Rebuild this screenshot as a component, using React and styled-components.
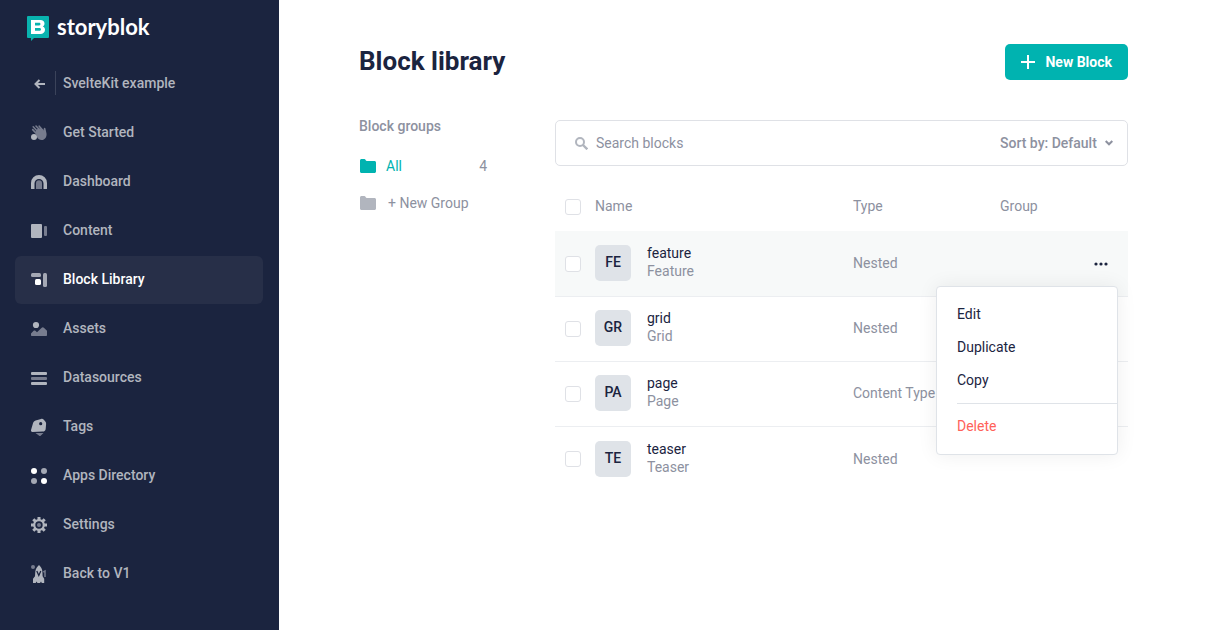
import React, { useState } from "react";
import styled, { createGlobalStyle } from "styled-components";

const GlobalStyle = createGlobalStyle`
  * {
    box-sizing: border-box;
  }
  body {
    margin: 0;
    background: #fff;
    color: #1b243f;
    font-family: Roboto, "Liberation Sans", sans-serif;
    font-size: 14px;
    line-height: 18px;
  }
  button, input, select {
    font: inherit;
    color: inherit;
  }
`;

const Layout = styled.div`
  display: flex;
  min-height: 100vh;
`;
const Sidebar = styled.aside`
  flex: 0 0 279px;
  padding: 15px 16px 0 15px;
  background: #1b243f;
`;
const Logo = styled.a`
  display: flex;
  align-items: center;
  gap: 8px;
  height: 26px;
  margin: 0 0 19px 12px;
  color: #fff;
  font-family: Lato, sans-serif;
  font-size: 22px;
  font-weight: 700;
  line-height: 24px;
  text-decoration: none;
`;
const LogoText = styled.span`
  padding-bottom: 2px;
`;
const Nav = styled.nav`
  display: flex;
  flex-direction: column;
  gap: 1px;
`;
const NavItem = styled.a`
  display: flex;
  align-items: center;
  height: 48px;
  padding: 0 15px 2px;
  border-radius: 6px;
  background: ${(props) => (props.$active ? "#272f48" : "transparent")};
  color: ${(props) => (props.$active ? "#fff" : "#b1b5be")};
  font-weight: 500;
  text-decoration: none;
`;
const NavIcon = styled.span`
  display: flex;
  align-items: center;
  width: 33px;
  height: 24px;
  padding: 2px 0 0 1px;
`;
const BackIcon = styled(NavIcon)`
  width: 26px;
  padding-left: 4px;
  margin-right: 7px;
  border-right: 1px solid #3b435a;
`;
const Main = styled.main`
  flex: 1;
  min-width: 0;
  padding: 44px 77px 40px 80px;
`;
const Header = styled.header`
  display: flex;
  align-items: center;
  justify-content: space-between;
  margin-bottom: 40px;
`;
const Title = styled.h1`
  margin: 0;
  padding-bottom: 2px;
  font-size: 26px;
  font-weight: 700;
  line-height: 34px;
`;
const NewBlock = styled.button`
  display: flex;
  align-items: center;
  gap: 10px;
  height: 36px;
  padding: 0 16px;
  border: none;
  border-radius: 5px;
  background: #00b3b0;
  color: #fff;
  font-weight: 700;
`;
const Body = styled.div`
  display: grid;
  grid-template-columns: 128px minmax(0, 1fr);
  gap: 68px;
`;
const Groups = styled.section`
  color: #8d919f;
`;
const GroupsTitle = styled.h2`
  margin: 0 0 15px;
  font-size: 14px;
  font-weight: 500;
  line-height: 12px;
`;
const GroupButton = styled.button`
  display: flex;
  align-items: center;
  gap: ${(props) => (props.$active ? "10px" : "12px")};
  width: 100%;
  height: 37px;
  padding: 0 0 0 1px;
  border: none;
  background: none;
  color: ${(props) => (props.$active ? "#00b3b0" : "#8d919f")};
`;
const Count = styled.span`
  margin-left: auto;
  color: #8d919f;
`;
const SearchBar = styled.div`
  display: flex;
  align-items: center;
  height: 46px;
  padding: 0 14px 0 19px;
  border: 1px solid #dfe1e6;
  border-radius: 5px;
  color: #8d919f;
`;
const SearchLabel = styled.label`
  display: flex;
  flex: 1;
  align-items: center;
  gap: 8px;
`;
const SearchInput = styled.input`
  flex: 1;
  min-width: 0;
  padding: 0;
  border: none;
  outline: none;
  background: none;
  &::placeholder {
    color: #8d919f;
    opacity: 1;
  }
`;
const SortSelect = styled.select`
  appearance: none;
  margin-right: 8px;
  padding: 0;
  border: none;
  background: none;
  font-weight: 500;
`;
const Table = styled.table`
  width: 100%;
  table-layout: fixed;
  border-collapse: separate;
  border-spacing: 0;
`;
const HeadCell = styled.th`
  width: ${(props) => props.$width || "auto"};
  height: 66px;
  padding: 15px 0 0;
  border-bottom: 1px solid #f7f9f9;
  color: #8d919f;
  font-weight: 400;
  text-align: left;
`;
const Row = styled.tr`
  background: ${(props) => (props.$active ? "#f7f9f9" : "#fff")};
  &:last-child td {
    border-bottom: none;
  }
`;
const Cell = styled.td`
  height: 65px;
  padding: 0 0 2px;
  border-bottom: 1px solid #eceef1;
  color: #8d919f;
`;
const Checkbox = styled.input`
  appearance: none;
  display: block;
  width: 16px;
  height: 16px;
  margin: 1px 0 0 10px;
  border: 1px solid #dfe1e6;
  border-radius: 3px;
  background: #fff;
  &:checked {
    background: #00b3b0;
  }
`;
const BlockInfo = styled.div`
  display: flex;
  align-items: center;
  gap: 16px;
`;
const Avatar = styled.span`
  width: 36px;
  height: 36px;
  border-radius: 5px;
  background: #dfe3e8;
  color: #1b243f;
  font-weight: 500;
  line-height: 34px;
  text-align: center;
`;
const BlockText = styled.div`
  padding-bottom: 2px;
`;
const BlockName = styled.div`
  color: #1b243f;
`;
const Actions = styled.div`
  position: relative;
  display: flex;
  justify-content: flex-end;
  padding-right: 20px;
`;
const MoreButton = styled.button`
  display: flex;
  padding: 8px 0 6px;
  border: none;
  background: none;
`;
const Menu = styled.div`
  position: absolute;
  z-index: 1;
  top: 32px;
  right: 10px;
  width: 182px;
  padding: 10px 0 12px 20px;
  border: 1px solid #dfe3e8;
  border-radius: 4px;
  background: #fff;
  box-shadow: 0 0 20px rgba(0, 0, 0, 0.07);
`;
const MenuItem = styled.button`
  display: block;
  width: 100%;
  height: 33px;
  padding: 0;
  border: none;
  background: none;
  color: ${(props) => (props.$danger ? "#ff6159" : "#1b243f")};
  text-align: left;
`;
const Divider = styled.hr`
  height: 1px;
  margin: 7px 0 5px;
  border: none;
  background: #dfe3e8;
`;

const icons = {
  started: (
    <>
      <g fill="none" stroke="#777c8e" strokeLinecap="round" strokeWidth="1.6">
        <path d="M1.7 4.6 6 9.3M2.2 1.8 8 8M5 1l5 5.2M8.2 1.2 12 5.5" />
      </g>
      <path
        fill="#777c8e"
        d="m4.5 6.2 2-2.1 3.6-.8 2.3 2.5.4-2.3c.2-1 1.7-.8 1.7.2l1 4.7c.5 3-1.5 6.6-4.9 6.6-2 0-3.4-1-4.4-2.5z"
      />
      <circle cx="3" cy="12" r="3" fill="#b1b5be" />
    </>
  ),
  dashboard: (
    <>
      <path
        fill="#b1b5be"
        d="M0 14.5V9a8 8 0 0 1 16 0v5.500a.5.5 0 0 1-.5.5h-3V9.500a4.500 4.500 0 0 0-9 0V15h-3a.5.5 0 0 1-.5-.5z"
      />
      <path fill="#777c8e" d="M5 15V9.200a3 3 0 0 1 6 0V15z" />
    </>
  ),
  content: (
    <>
      <rect y="1" width="11" height="14" rx="1" fill="#b1b5be" />
      <rect x="13" y="3" width="3" height="10" rx="1" fill="#777c8e" />
    </>
  ),
  library: (
    <>
      <rect y="1" width="10" height="4" rx="1.500" fill="#a4a8b4" />
      <rect x="12" y="1" width="4" height="14" rx="1.500" fill="#a4a8b4" />
      <rect x="4" y="7" width="6" height="6" rx="1.500" fill="#fff" />
    </>
  ),
  assets: (
    <>
      <circle cx="5" cy="4" r="3.100" fill="#b1b5be" />
      <path
        fill="#777c8e"
        d="M0 14v-1.500l2.600-2.700c.6-.6 1.200-.5 1.800 0L6 11.200l4.700-4.500c.7-.7 1.500-.7 2.200 0L16 9.800V14c0 .6-.4 1-1 1H1c-.6 0-1-.4-1-1z"
      />
    </>
  ),
  datasources: (
    <>
      <rect y="2" width="16" height="3" rx="1" fill="#b1b5be" />
      <rect y="7" width="16" height="3" rx="1" fill="#777c8e" />
      <rect y="12" width="16" height="3" rx="1" fill="#b1b5be" />
    </>
  ),
  tags: (
    <>
      <path
        fill="#b1b5be"
        fillRule="evenodd"
        d="M2 4.200C2.500 3 3.300 2 4.600 1.600L10 0c1-.3 2-.2 2.800.7l1.700 2c.5.700.7 1.400.6 2.300l-.4 4.700c-.1 1.700-1.200 2.800-3 2.900L1.500 13C.2 13-.3 12 .1 10.800zM9.700 3.100a1.600 1.600 0 1 0 0 3.200 1.600 1.600 0 0 0 0-3.200z"
      />
      <path fill="#777c8e" d="M4.500 14h8l-2.900 2.700c-.5.400-.9.400-1.400 0z" />
    </>
  ),
  apps: (
    <>
      <circle cx="3" cy="3" r="3" fill="#fff" />
      <circle cx="13" cy="3" r="3" fill="#a4a8b4" />
      <circle cx="3" cy="13" r="3" fill="#a4a8b4" />
      <circle cx="13" cy="13" r="3" fill="#fff" />
    </>
  ),
  settings: (
    <>
      <g stroke="#b1b5be" strokeWidth="3">
        <path d="M8 0v3.500M8 12.500V16M0 8h3.500M12.500 8H16M2.300 2.300l2.500 2.500M11.200 11.200l2.500 2.500M2.300 13.700l2.500-2.500M11.200 4.800l2.500-2.500" />
      </g>
      <circle cx="8" cy="8" r="4.800" fill="none" stroke="#b1b5be" strokeWidth="2.200" />
      <circle cx="8" cy="8" r="2" fill="#777c8e" />
    </>
  ),
  rocket: (
    <>
      <circle cx="2" cy="1" r="2" fill="#777c8e" />
      <path
        fill="#b1b5be"
        d="M8-1c2 1.800 3.200 4 3.400 6.500l.2 4.700 1.600 2.600v4.200h-2.400l-.8-1.500-1 1.500H6.500l-1-1.500-.8 1.500H2v-4.200l2-2.600.3-4.700C4.600 3 6 .800 8-1z"
      />
      <path d="m5.800 5 2 4.500 2-4.500" fill="none" stroke="#1b243f" strokeWidth="1.300" />
      <path d="m12.300 6 1.700-1v6" fill="none" stroke="#777c8e" strokeWidth="1.500" />
    </>
  ),
};

const navItems = [
  { label: "Get Started", icon: "started" },
  { label: "Dashboard", icon: "dashboard" },
  { label: "Content", icon: "content" },
  { label: "Block Library", icon: "library", active: true },
  { label: "Assets", icon: "assets" },
  { label: "Datasources", icon: "datasources" },
  { label: "Tags", icon: "tags" },
  { label: "Apps Directory", icon: "apps" },
  { label: "Settings", icon: "settings" },
  { label: "Back to V1", icon: "rocket" },
];

const blocks = [
  { name: "feature", title: "Feature", type: "Nested" },
  { name: "grid", title: "Grid", type: "Nested" },
  { name: "page", title: "Page", type: "Content Type" },
  { name: "teaser", title: "Teaser", type: "Nested" },
];

const Folder = ({ color }) => (
  <svg width="16" height="14" viewBox="0 0 16 14" fill={color}>
    <path d="M0 1.500C0 .7.700 0 1.500 0h2.800C5.700 0 5.500 2 7 2h7.500c.8 0 1.500.700 1.500 1.500v9c0 .8-.7 1.500-1.500 1.500h-13C.7 14 0 13.300 0 12.500z" />
  </svg>
);

const App = () => {
  const [search, setSearch] = useState("");
  const [openMenu, setOpenMenu] = useState("feature");

  return (
    <Layout>
      <GlobalStyle />
      <Sidebar>
        <Logo href="#">
          <svg width="22" height="26" viewBox="0 0 22 26">
            <path fill="#09b3af" d="M1 1h20a1 1 0 0 1 1 1v20a1 1 0 0 1-1 1H7l-3 3v-3H1a1 1 0 0 1-1-1V2a1 1 0 0 1 1-1z" />
            <path
              fill="#fff"
              fillRule="evenodd"
              d="M4 5h9.500c2.300 0 4 1.300 4 3.600 0 1.400-.6 2.400-1.700 3 1.500.6 2.200 1.700 2.200 3.200 0 2.700-2 4.200-4.500 4.200H4zm4 2.800v2.600h4.200c1.700 0 1.700-2.600 0-2.600zm0 5.200v2.800h4.600c1.800 0 1.800-2.800 0-2.800z"
            />
          </svg>
          <LogoText>storyblok</LogoText>
        </Logo>
        <Nav>
          <NavItem href="#">
            <BackIcon>
              <svg width="12" height="10" viewBox="0 0 12 10" fill="none" stroke="currentColor" strokeWidth="2">
                <path d="M11 5H1.500M5.500 1l-4 4 4 4" />
              </svg>
            </BackIcon>
            SvelteKit example
          </NavItem>
          {navItems.map((item) => (
            <NavItem key={item.label} href="#" $active={item.active}>
              <NavIcon>
                <svg width="16" height="16" viewBox="0 0 16 16" overflow="visible">
                  {icons[item.icon]}
                </svg>
              </NavIcon>
              {item.label}
            </NavItem>
          ))}
        </Nav>
      </Sidebar>
      <Main>
        <Header>
          <Title>Block library</Title>
          <NewBlock>
            <svg width="14" height="14" viewBox="0 0 14 14" stroke="#fff" strokeWidth="2">
              <path d="M7 0v14M0 7h14" />
            </svg>
            New Block
          </NewBlock>
        </Header>
        <Body>
          <Groups>
            <GroupsTitle>Block groups</GroupsTitle>
            <GroupButton $active>
              <Folder color="#00b3b0" />
              All
              <Count>4</Count>
            </GroupButton>
            <GroupButton>
              <Folder color="#b1b5be" />+ New Group
            </GroupButton>
          </Groups>
          <section>
            <SearchBar>
              <SearchLabel>
                <svg width="13" height="13" viewBox="0 0 13 13" fill="none" stroke="#b1b5be" strokeWidth="2">
                  <circle cx="5" cy="5" r="4" />
                  <path d="m8 8 4.300 4.300" strokeWidth="2.400" />
                </svg>
                <SearchInput
                  aria-label="Search blocks"
                  placeholder="Search blocks"
                  value={search}
                  onChange={(e) => setSearch(e.target.value)}
                />
              </SearchLabel>
              <SortSelect aria-label="Sort by">
                <option>Sort by: Default</option>
              </SortSelect>
              <svg width="8" height="6" viewBox="0 0 8 6" fill="none" stroke="currentColor" strokeWidth="2">
                <path d="m.7 1 3.300 3.300L7.300 1" />
              </svg>
            </SearchBar>
            <Table>
              <thead>
                <tr>
                  <HeadCell $width="40px">
                    <Checkbox type="checkbox" aria-label="Select all" />
                  </HeadCell>
                  <HeadCell>Name</HeadCell>
                  <HeadCell $width="147px">Type</HeadCell>
                  <HeadCell $width="84px">Group</HeadCell>
                  <HeadCell $width="44px" />
                </tr>
              </thead>
              <tbody>
                {blocks.map((block) => (
                  <Row key={block.name} $active={openMenu === block.name}>
                    <Cell>
                      <Checkbox type="checkbox" aria-label={block.name} />
                    </Cell>
                    <Cell>
                      <BlockInfo>
                        <Avatar>{block.name.slice(0, 2).toUpperCase()}</Avatar>
                        <BlockText>
                          <BlockName>{block.name}</BlockName>
                          <div>{block.title}</div>
                        </BlockText>
                      </BlockInfo>
                    </Cell>
                    <Cell>{block.type}</Cell>
                    <Cell />
                    <Cell>
                      {openMenu === block.name && (
                        <Actions>
                          <MoreButton aria-label="More" onClick={() => setOpenMenu("")}>
                            <svg width="14" height="4" viewBox="0 0 14 4" fill="#1b243f">
                              <circle cx="2" cy="2" r="1.600" />
                              <circle cx="7" cy="2" r="1.600" />
                              <circle cx="12" cy="2" r="1.600" />
                            </svg>
                          </MoreButton>
                          <Menu>
                            <MenuItem>Edit</MenuItem>
                            <MenuItem>Duplicate</MenuItem>
                            <MenuItem>Copy</MenuItem>
                            <Divider />
                            <MenuItem $danger>Delete</MenuItem>
                          </Menu>
                        </Actions>
                      )}
                    </Cell>
                  </Row>
                ))}
              </tbody>
            </Table>
          </section>
        </Body>
      </Main>
    </Layout>
  );
};

export default App;
